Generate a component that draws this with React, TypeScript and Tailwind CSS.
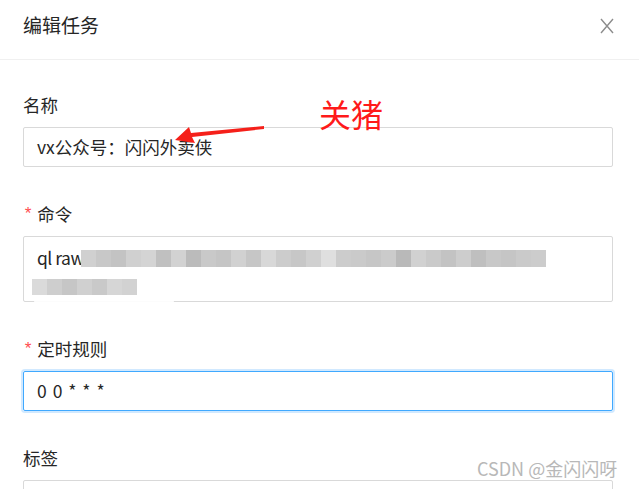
import React from "react";

const font = {
  fontFamily: '"Noto Sans CJK SC", "Microsoft YaHei", sans-serif',
};

const line1 = [
  "#d0d0d0", "#c8c8c8", "#c3c3c3", "#d0d0d0", "#d4d4d4", "#c0c0c0", "#d2d2d2", "#bbbbbb",
  "#c9c9c9", "#c5c5c5", "#d1d1d1", "#c6c6c6", "#d8d8d8", "#cccccc", "#c7c7c7", "#d0d0d0",
  "#dfdfdf", "#cccccc", "#cacaca", "#c6c6c6", "#cbcbcb", "#b9b9b9", "#d1d1d1", "#cacaca",
  "#c3c3c3", "#cdcdcd", "#bfbfbf", "#c8c8c8", "#c5c5c5", "#cacaca", "#cccccc",
];
const line2 = ["#dadada", "#cecece", "#c6c6c6", "#d0d0d0", "#c9c9c9", "#d6d6d6", "#d2d2d2"];

function Label({ text, required }: { text: string; required?: boolean }) {
  return (
    <div className="flex items-center h-[28px] mb-[8px] text-[17.5px] leading-[28px] text-[#262626]">
      {required && (
        <span className="text-[#ff4d4f] text-[17px] mr-[4px] leading-none" style={{ fontFamily: '"Liberation Mono", monospace' }}>
          *
        </span>
      )}
      <span>{text}</span>
    </div>
  );
}

export default function App() {
  return (
    <div className="relative w-[639px] h-[489px] bg-white overflow-hidden" style={font}>
      {/* header */}
      <div className="flex items-center justify-between h-[60px] border-b border-[#f0f0f0] pl-[23px] pr-[25px] pb-[10px]">
        <span className="text-[19px] text-[#262626] leading-none">编辑任务</span>
        <svg width="14" height="16" viewBox="0 0 14 16" className="mt-[2px]">
          <path d="M1 1 L13 15 M13 1 L1 15" stroke="#8c8c8c" strokeWidth="1.4" fill="none" />
        </svg>
      </div>

      {/* body */}
      <div className="pl-[23px] pr-[26px] pt-[31px] flex flex-col">
        <Label text="名称" />
        <div className="relative h-[40px] border border-[#d9d9d9] rounded-[2px] flex items-center px-[13px] text-[17.5px] text-[#262626] mb-[33px]">
          vx公众号：闪闪外卖侠
        </div>

        <Label text="命令" required />
        <div className="relative h-[66px] border border-[#d9d9d9] rounded-[2px] px-[13px] pt-[10px] text-[17.5px] text-[#262626] mb-[33px]">
          <div className="flex items-center h-[22px]">
            <span className="leading-none tracking-[-0.5px]">ql raw</span>
            <div className="flex h-[17px] -ml-[3px]">
              {line1.map((c, i) => (
                <div key={i} className="w-[15px] h-full" style={{ background: c }} />
              ))}
            </div>
          </div>
          <div className="flex h-[16px] mt-[10px] -ml-[5px]">
            {line2.map((c, i) => (
              <div key={i} className="w-[15px] h-full" style={{ background: c }} />
            ))}
          </div>
          <div className="absolute left-[10px] bottom-[-8px] w-[140px] h-[14px] bg-white rounded-full opacity-90" />
        </div>

        <Label text="定时规则" required />
        <div className="h-[40px] border border-[#40a9ff] rounded-[2px] shadow-[0_0_0_2px_rgba(24,144,255,0.2)] flex items-center px-[13px] text-[17.5px] text-[#262626] mb-[33px] tracking-[1px]">
          0 0 * * *
        </div>

        <Label text="标签" />
        <div className="h-[40px] border border-[#d9d9d9] rounded-[2px]" />
      </div>

      {/* annotation */}
      <div className="absolute left-[319px] top-[97px] text-[32px] leading-none text-[#ff1a1a]">关猪</div>
      <svg className="absolute left-0 top-0" width="639" height="489" viewBox="0 0 639 489">
        <path d="M264 126 L264 129 L192 137 L195 143 L175 140 L189 127 L191 133 Z" fill="#f5201a" />
      </svg>

      {/* watermark */}
      <div className="absolute left-[477px] top-[459px] text-[18px] text-[#b8b8b8] leading-none whitespace-nowrap">
        CSDN @金闪闪呀
      </div>
    </div>
  );
}
